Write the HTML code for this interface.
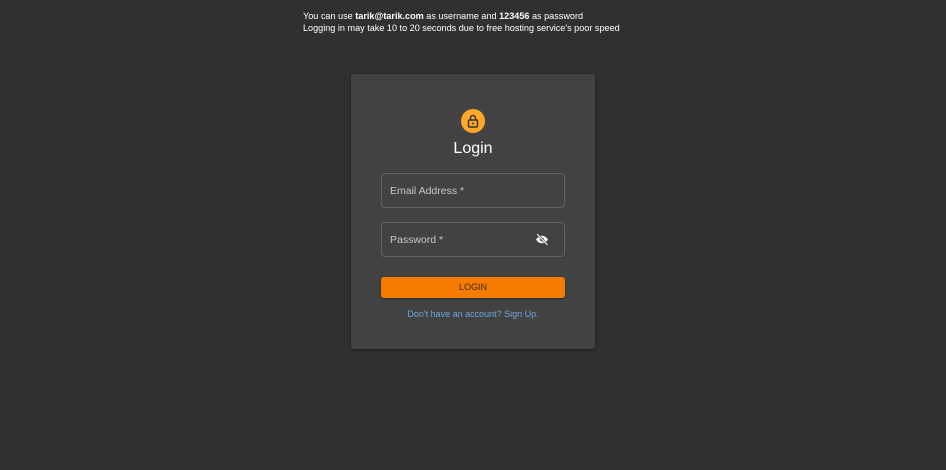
<!DOCTYPE html>
<html><head><style>
body{margin:0;width:946px;height:470px;background:#303030;font-family:"Liberation Sans",sans-serif;position:relative;overflow:hidden;color:#fff}
.t{position:absolute;left:303px;font-size:9.1px;color:#fff}
.card{position:absolute;left:351px;top:74px;width:244px;height:275px;background:#424242;border-radius:3px;box-shadow:0 1px 3px rgba(0,0,0,.4)}
.av{position:absolute;left:461px;top:109px;width:24px;height:24px;border-radius:50%;background:#ffa726}
.h{position:absolute;left:351px;width:244px;top:140px;text-align:center;font-size:16px}
.f{position:absolute;left:381px;width:182px;height:33px;border:1px solid #626262;border-radius:4px}
.f span{position:absolute;left:8px;top:11px;font-size:10.5px;color:#c8c8c8}
.btn{position:absolute;left:381px;top:277px;width:184px;height:21px;background:#f57c00;border-radius:3px;color:#3a2a10;font-size:9px;text-align:center;line-height:21px;box-shadow:0 1px 2px rgba(0,0,0,.4)}
.lk{position:absolute;left:351px;width:244px;top:309px;text-align:center;font-size:9px;color:#6fa8dc}
</style></head><body>
<div class="t" style="top:11px">You can use <b>tarik@tarik.com</b> as username and <b>123456</b> as password</div>
<div class="t" style="top:23px">Logging in may take 10 to 20 seconds due to free hosting service's poor speed</div>
<div class="card"></div>
<div class="av"><svg width="24" height="24" viewBox="0 0 24 24"><rect x="7.5" y="11" width="9" height="7" rx="1" fill="none" stroke="#333" stroke-width="1.4"/><path d="M9.5 11V9a2.5 2.5 0 0 1 5 0v2" fill="none" stroke="#333" stroke-width="1.4"/><circle cx="12" cy="14.5" r="1" fill="#333"/></svg></div>
<div class="h">Login</div>
<div class="f" style="top:173px"><span>Email Address *</span></div>
<div class="f" style="top:222px"><span>Password *</span>
<svg style="position:absolute;left:153px;top:10px" width="14" height="13" viewBox="0 0 24 24"><path d="M1 12s4-7 11-7 11 7 11 7-4 7-11 7S1 12 1 12z" fill="#fff"/><circle cx="12" cy="12" r="3.5" fill="#424242"/><path d="M3 2l19 20" stroke="#424242" stroke-width="4"/><path d="M3 2l19 20" stroke="#fff" stroke-width="2"/></svg></div>
<div class="btn">LOGIN</div>
<div class="lk">Don't have an account? Sign Up.</div>
</body></html>
